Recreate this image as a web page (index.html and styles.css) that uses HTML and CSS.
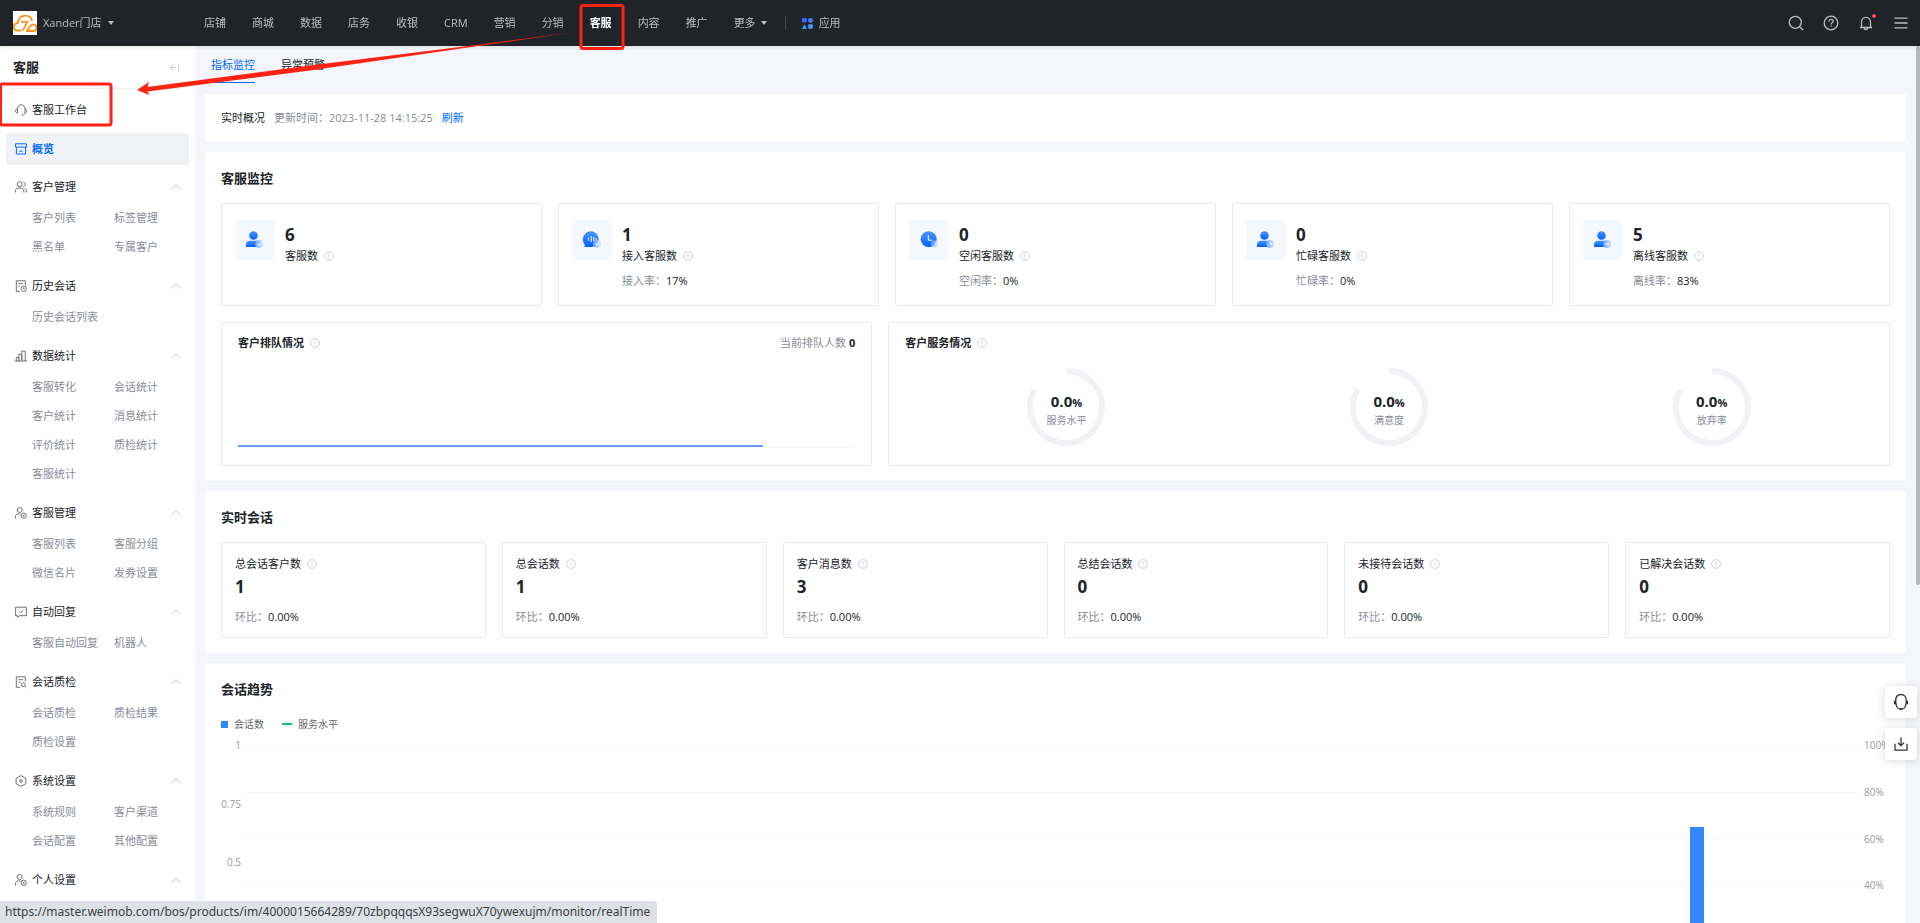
FILE: index.html
```html
<!DOCTYPE html>
<html lang="zh-CN">
  <head>
    <meta charset="UTF-8" />
    <meta name="viewport" content="width=device-width, initial-scale=1.0" />
    <title>客服概览</title>
    <link rel="stylesheet" href="styles.css">
  </head>
  <body>
    <!-- 图标库 -->
    <svg class="icon-defs" width="0" height="0" aria-hidden="true">
      <defs>
        <linearGradient id="blue" x1="0" y1="0" x2="0" y2="1">
          <stop offset="0" stop-color="#4b94ff" />
          <stop offset="1" stop-color="#0062ff" />
        </linearGradient>
        <linearGradient id="badge" x1="0" y1="0" x2="1" y2="0">
          <stop offset="0" stop-color="#6ba7ff" />
          <stop offset="1" stop-color="#d6e6ff" />
        </linearGradient>
      </defs>
      <symbol id="info" viewBox="0 0 10 10">
        <circle cx="5" cy="5" r="4.4" fill="none" stroke="currentColor" stroke-width=".8" />
        <path d="M5 2.4v3.2M5 6.6v.9" stroke="currentColor" stroke-width=".9" />
      </symbol>
      <symbol id="up" viewBox="0 0 10 6">
        <path d="M.5 5.2 5 .8l4.500 4.400" fill="none" stroke="currentColor" stroke-width=".8" />
      </symbol>
      <symbol id="user-set" viewBox="0 0 12 12">
        <circle cx="4.700" cy="3" r="2.500" />
        <path d="M.5 11.500V9.300c0-1.400 1-2.300 2.300-2.300h2.500" />
        <circle cx="8.700" cy="8.700" r="2.600" />
        <circle cx="8.700" cy="8.700" r=".6" />
      </symbol>
      <symbol id="person" viewBox="0 0 20 20">
        <circle cx="8.500" cy="5.500" r="4.300" fill="url(#blue)" />
        <path d="M1 17v-2.300c0-2.300 1.700-3.900 4-3.900h6c2.300 0 4 1.600 4 3.900V17z" fill="url(#blue)" />
        <circle cx="14.200" cy="14" r="4" fill="url(#badge)" />
      </symbol>
    </svg>

    <!-- 顶部导航 -->
    <header class="header">
      <a class="shop" href="#">
        <svg class="logo" viewBox="0 0 24 24">
          <rect width="24" height="24" fill="#fff" />
          <path d="M8.500 19.500H4.500C2 19.500.8 17.700.8 15.800c0-2 1.500-3.700 4-3.700C4.900 7.500 8.200 4.600 12.300 4.600c3.500 0 6 2 6.800 5.200M8 10.800h6.300L9.800 19.500M13 20h7.500c1.800 0 3-1.200 3-3.200 0-2-1.300-3.500-3.200-3.500-2.200 0-3.400 2-6.300 6.500" fill="none" stroke="#ff9518" stroke-width="1.800" />
        </svg>
        <span>Xander门店</span>
        <i class="caret"></i>
      </a>
      <nav class="nav">
        <a href="#">店铺</a>
        <a href="#">商城</a>
        <a href="#">数据</a>
        <a href="#">店务</a>
        <a href="#">收银</a>
        <a href="#">CRM</a>
        <a href="#">营销</a>
        <a href="#">分销</a>
        <a class="active" href="#">客服</a>
        <a href="#">内容</a>
        <a href="#">推广</a>
        <a href="#">更多<i class="caret"></i></a>
      </nav>
      <a class="apps" href="#">
        <svg width="11" height="11" viewBox="0 0 11 11">
          <rect width="4.600" height="4.600" rx="1" fill="#2f6bff" />
          <circle cx="8.500" cy="2.400" r="2.400" fill="#4a7dff" />
          <path d="M2.400 6.200 4.800 11H0z" fill="#1fb0ff" />
          <rect x="6.200" y="6.200" width="4.600" height="4.600" rx="1" fill="#4a9bff" />
        </svg>
        应用
      </a>
      <div class="tools">
        <button aria-label="搜索">
          <svg viewBox="0 0 16 16"><circle cx="7.300" cy="7.300" r="6" /><path d="m11.700 11.700 3.500 3.500" /></svg>
        </button>
        <button aria-label="帮助">
          <svg viewBox="0 0 16 16"><circle cx="8" cy="8" r="6.800" /><path d="M5.900 6.500c0-1.300 1-2.100 2.100-2.100s2.100.8 2.100 1.900c0 1.500-2 1.500-2 3.100M8.100 10.500v1.300" /></svg>
        </button>
        <button aria-label="通知">
          <svg viewBox="0 0 16 16"><path d="M2 12.500h12M3.500 12.500V7c0-2.700 2-4.700 4.500-4.700s4.500 2 4.500 4.700v5.500M6 12.700c.2 1.300 1 2 2 2s1.800-.7 2-2" /><circle class="dot" cx="16" cy="1" r="2" /></svg>
        </button>
        <button aria-label="菜单">
          <svg viewBox="0 0 16 16"><path d="M1.500 3.200h13M1.500 8h13M1.500 12.800h13" /></svg>
        </button>
      </div>
    </header>

    <div class="layout">
      <!-- 侧边栏 -->
      <aside class="sidebar">
        <div class="side-title">
          <h2>客服</h2>
          <button aria-label="收起">
            <svg width="11" height="9" viewBox="0 0 11 9"><path d="M4.500 1 1 4.500 4.500 8M1 4.500h6M9.500 1v7" /></svg>
          </button>
        </div>
        <a class="side-item" href="#">
          <svg class="side-icon" viewBox="0 0 12 12"><path d="M2.500 9V5C2.500 2.400 4 .8 6.200 .8S10 2.400 10 5v3.500c0 1.600-1 2.500-2.600 2.500H6.500M2.500 5C1.200 5 .5 5.900 .5 7s.7 2 2 2M10 5c1.100 0 1.600.9 1.600 2S11.100 9 10 9" /></svg>
          客服工作台
        </a>
        <a class="side-item selected" href="#">
          <svg class="side-icon" viewBox="0 0 12 12"><path d="M.6.800h10.800v3.300H.6zM1.400 4.100v6.900h9.200V4.100M4.200 8.200h3.600" /></svg>
          概览
        </a>

        <section class="group">
          <a class="side-item" href="#">
            <svg class="side-icon" viewBox="0 0 12 12"><circle cx="4.700" cy="3.200" r="2.500" /><path d="M.5 11.500V9.600C.5 8 1.500 7.100 3 7.100h3.300c1.500 0 2.500.9 2.500 2.500v1.900M8.300 1c1.300.3 2 1.100 2 2.200S9.600 5 8.600 5.400M9.800 7.300c1.100.4 1.700 1.200 1.700 2.400v1.800" /></svg>
            客户管理
            <svg class="up"><use href="#up" /></svg>
          </a>
          <div class="links">
            <a href="#">客户列表</a>
            <a href="#">标签管理</a>
            <a href="#">黑名单</a>
            <a href="#">专属客户</a>
          </div>
        </section>
        <section class="group">
          <a class="side-item" href="#">
            <svg class="side-icon" viewBox="0 0 12 12"><path d="M5 11.300H1.300V.8h9v4.400M3.500 3.700h4.700M3.500 6.200H5" /><circle cx="8.700" cy="8.700" r="2.700" /><path d="M8.500 7.300v1.500h1.300" /></svg>
            历史会话
            <svg class="up"><use href="#up" /></svg>
          </a>
          <div class="links">
            <a href="#">历史会话列表</a>
          </div>
        </section>
        <section class="group">
          <a class="side-item" href="#">
            <svg class="side-icon" viewBox="0 0 12 12"><path d="M0 11h12M1.300 11V7.500h2.500V11M3.800 11V4.300h3V11M6.800 11V1h3.500v10" /></svg>
            数据统计
            <svg class="up"><use href="#up" /></svg>
          </a>
          <div class="links">
            <a href="#">客服转化</a>
            <a href="#">会话统计</a>
            <a href="#">客户统计</a>
            <a href="#">消息统计</a>
            <a href="#">评价统计</a>
            <a href="#">质检统计</a>
            <a href="#">客服统计</a>
          </div>
        </section>
        <section class="group">
          <a class="side-item" href="#">
            <svg class="side-icon"><use href="#user-set" /></svg>
            客服管理
            <svg class="up"><use href="#up" /></svg>
          </a>
          <div class="links">
            <a href="#">客服列表</a>
            <a href="#">客服分组</a>
            <a href="#">微信名片</a>
            <a href="#">发券设置</a>
          </div>
        </section>
        <section class="group">
          <a class="side-item" href="#">
            <svg class="side-icon" viewBox="0 0 12 12"><path d="M.6 1.200h10.800v8.500H4.500l-2 1.600V9.700H.6zM4 5.300l1.500 1.500L8.400 4" /></svg>
            自动回复
            <svg class="up"><use href="#up" /></svg>
          </a>
          <div class="links">
            <a href="#">客服自动回复</a>
            <a href="#">机器人</a>
          </div>
        </section>
        <section class="group">
          <a class="side-item" href="#">
            <svg class="side-icon" viewBox="0 0 12 12"><path d="M5 11.300H1.300V.8h9v4.700M3.500 3.700h4.700M3.500 6.200h2" /><circle cx="8.300" cy="8.700" r="1.900" /><path d="m9.700 10 1.600 1.600" /></svg>
            会话质检
            <svg class="up"><use href="#up" /></svg>
          </a>
          <div class="links">
            <a href="#">会话质检</a>
            <a href="#">质检结果</a>
            <a href="#">质检设置</a>
          </div>
        </section>
        <section class="group">
          <a class="side-item" href="#">
            <svg class="side-icon" viewBox="0 0 12 12"><path d="m6 .6 4.900 2.800v5.200L6 11.400 1.100 8.600V3.400z" /><circle cx="6" cy="6" r="1.300" /></svg>
            系统设置
            <svg class="up"><use href="#up" /></svg>
          </a>
          <div class="links">
            <a href="#">系统规则</a>
            <a href="#">客户渠道</a>
            <a href="#">会话配置</a>
            <a href="#">其他配置</a>
          </div>
        </section>
        <section class="group">
          <a class="side-item" href="#">
            <svg class="side-icon"><use href="#user-set" /></svg>
            个人设置
            <svg class="up"><use href="#up" /></svg>
          </a>
        </section>
      </aside>

      <!-- 主体内容 -->
      <main class="main">
        <nav class="tabs">
          <a class="active" href="#">指标监控</a>
          <a href="#">异常预警</a>
        </nav>

        <section class="card overview">
          <span>实时概况</span>
          <span class="muted">更新时间：2023-11-28 14:15:25</span>
          <a href="#">刷新</a>
        </section>

        <!-- 客服监控 -->
        <section class="card">
          <h3>客服监控</h3>
          <div class="monitor">
            <div class="box stat">
              <div class="stat-icon"><svg viewBox="0 0 20 20"><use href="#person" /><path d="m12.500 13.800 1.500 1.500 2.200-2.500" class="mark" /></svg></div>
              <div class="stat-text">
                <strong>6</strong>
                <p>客服数 <svg class="info"><use href="#info" /></svg></p>
              </div>
            </div>
            <div class="box stat">
              <div class="stat-icon"><svg viewBox="0 0 20 20"><path d="M2.200 17c.6-.8.700-1.700.2-3A7.900 7.900 0 1 1 10 17z" fill="url(#blue)" /><path d="M6.500 7.500v3M9.200 6v6M11.700 7v4M14 8v2" class="mark" /><circle cx="15" cy="13.700" r="4" fill="url(#badge)" opacity=".85" /><path d="m13.300 13.600 1.400 1.400 2.200-2.500" class="mark" /></svg></div>
              <div class="stat-text">
                <strong>1</strong>
                <p>接入客服数 <svg class="info"><use href="#info" /></svg></p>
                <p class="rate">接入率：<span>17%</span></p>
              </div>
            </div>
            <div class="box stat">
              <div class="stat-icon"><svg viewBox="0 0 20 20"><circle cx="9.700" cy="9.200" r="8" fill="url(#blue)" /><path d="M9.300 5v5.200h4" class="mark" /><circle cx="15.500" cy="14" r="3.500" fill="url(#badge)" opacity=".75" /></svg></div>
              <div class="stat-text">
                <strong>0</strong>
                <p>空闲客服数 <svg class="info"><use href="#info" /></svg></p>
                <p class="rate">空闲率：<span>0%</span></p>
              </div>
            </div>
            <div class="box stat">
              <div class="stat-icon"><svg viewBox="0 0 20 20"><use href="#person" /><path d="M14.200 11.700V14.300h1.700" class="mark" /></svg></div>
              <div class="stat-text">
                <strong>0</strong>
                <p>忙碌客服数 <svg class="info"><use href="#info" /></svg></p>
                <p class="rate">忙碌率：<span>0%</span></p>
              </div>
            </div>
            <div class="box stat">
              <div class="stat-icon"><svg viewBox="0 0 20 20"><use href="#person" /><path d="M12.500 14H16" class="mark" /></svg></div>
              <div class="stat-text">
                <strong>5</strong>
                <p>离线客服数 <svg class="info"><use href="#info" /></svg></p>
                <p class="rate">离线率：<span>83%</span></p>
              </div>
            </div>
          </div>

          <div class="situation">
            <div class="box queue">
              <div class="box-head">
                <h4>客户排队情况 <svg class="info"><use href="#info" /></svg></h4>
                <span class="muted">当前排队人数 <b>0</b></span>
              </div>
              <div class="queue-axis"><div class="queue-line" style="width: 85%"></div></div>
            </div>
            <div class="box service">
              <div class="box-head">
                <h4>客户服务情况 <svg class="info"><use href="#info" /></svg></h4>
              </div>
              <div class="rings">
                <div class="ring">
                  <svg viewBox="0 0 78 78"><path d="M39 3A36 36 0 1 1 7.500 21.500" /></svg>
                  <div class="ring-text"><strong>0.0<small>%</small></strong><span>服务水平</span></div>
                </div>
                <div class="ring">
                  <svg viewBox="0 0 78 78"><path d="M39 3A36 36 0 1 1 7.500 21.500" /></svg>
                  <div class="ring-text"><strong>0.0<small>%</small></strong><span>满意度</span></div>
                </div>
                <div class="ring">
                  <svg viewBox="0 0 78 78"><path d="M39 3A36 36 0 1 1 7.500 21.500" /></svg>
                  <div class="ring-text"><strong>0.0<small>%</small></strong><span>放弃率</span></div>
                </div>
              </div>
            </div>
          </div>
        </section>

        <!-- 实时会话 -->
        <section class="card">
          <h3>实时会话</h3>
          <div class="sessions">
            <div class="box session">
              <p>总会话客户数 <svg class="info"><use href="#info" /></svg></p>
              <strong>1</strong>
              <p class="rate">环比：<span>0.00%</span></p>
            </div>
            <div class="box session">
              <p>总会话数 <svg class="info"><use href="#info" /></svg></p>
              <strong>1</strong>
              <p class="rate">环比：<span>0.00%</span></p>
            </div>
            <div class="box session">
              <p>客户消息数 <svg class="info"><use href="#info" /></svg></p>
              <strong>3</strong>
              <p class="rate">环比：<span>0.00%</span></p>
            </div>
            <div class="box session">
              <p>总结会话数 <svg class="info"><use href="#info" /></svg></p>
              <strong>0</strong>
              <p class="rate">环比：<span>0.00%</span></p>
            </div>
            <div class="box session">
              <p>未接待会话数 <svg class="info"><use href="#info" /></svg></p>
              <strong>0</strong>
              <p class="rate">环比：<span>0.00%</span></p>
            </div>
            <div class="box session">
              <p>已解决会话数 <svg class="info"><use href="#info" /></svg></p>
              <strong>0</strong>
              <p class="rate">环比：<span>0.00%</span></p>
            </div>
          </div>
        </section>

        <!-- 会话趋势 -->
        <section class="card">
          <h3>会话趋势</h3>
          <div class="legend">
            <span><i class="square"></i>会话数</span>
            <span><i class="dash"></i>服务水平</span>
          </div>
          <div class="chart">
            <div class="axis left">
              <span>1</span><span>0.75</span><span>0.5</span><span>0.25</span><span>0</span>
            </div>
            <div class="plot">
              <div class="grid-lines"><i></i><i></i><i></i><i></i><i></i><i></i></div>
              <!-- 每小时一列，共 15 列 -->
              <div class="bars">
                <i></i><i></i><i></i><i></i><i></i><i></i><i></i><i></i><i></i><i></i><i></i><i></i><i></i>
                <i class="bar" style="height: 65%"></i>
                <i></i>
              </div>
            </div>
            <div class="axis right">
              <span>100%</span><span>80%</span><span>60%</span><span>40%</span><span>20%</span><span>0%</span>
            </div>
          </div>
        </section>
      </main>
    </div>

    <div class="scroll-thumb"></div>

    <!-- 悬浮按钮 -->
    <div class="float-tools">
      <button aria-label="联系客服">
        <svg width="16" height="18" viewBox="0 0 16 18"><path d="M5.800 15.800C3.500 14.300 2.700 11.500 2.700 7.700 2.700 3.800 4.800 1.500 8 1.500s5.300 2.300 5.300 6.200c0 3.800-.8 6.600-3.100 8.100" /><path d="M2 7.800v3.500M14 7.800v3.500M6.300 16h3.400" stroke-width="2.200" /></svg>
      </button>
      <button aria-label="下载">
        <svg width="16" height="16" viewBox="0 0 16 16"><path d="M2 7.800v6.400h12V7.800M8 1.500v8M5 6.700l3 3 3-3" /></svg>
      </button>
    </div>

    <!-- 标注 -->
    <svg class="marks" width="640" height="130" viewBox="0 0 640 130" aria-hidden="true">
      <rect x="581" y="5.500" width="42" height="43" rx="2" />
      <rect x="0.500" y="84" width="110.500" height="41" rx="2" />
      <path d="M137 90 149 82l-1.500 5L310 65.500 480 44.500l92-12-92 13.300L310 70.500 147.500 91.500l2 3.500z" />
    </svg>

    <div class="status">https://master.weimob.com/bos/products/im/4000015664289/70zbpqqqsX93segwuX70ywexujm/monitor/realTime</div>
  </body>
</html>
```

FILE: styles.css
```css
/* 基本页面样式 */
* {
  box-sizing: border-box;
}

body {
  margin: 0;
  height: 100vh;
  display: flex;
  flex-direction: column;
  overflow: hidden;
  font-family: 'Open Sans', 'Noto Sans CJK SC', sans-serif;
  font-size: 11px;
  line-height: 18px;
  color: #202328;
  background: #f5f6fb;
}

h2,
h3,
h4,
p {
  margin: 0;
}

a {
  color: inherit;
  text-decoration: none;
}

button {
  display: flex;
  align-items: center;
  justify-content: center;
  padding: 0;
  border: none;
  background: none;
  color: inherit;
  cursor: pointer;
}

.icon-defs {
  position: absolute;
}

/* 顶部导航 */
.header {
  flex: none;
  display: flex;
  align-items: center;
  height: 46px;
  padding: 0 11px 0 13px;
  color: #bcbdbf;
  background: #202328;
  box-shadow: 0 1px 4px rgba(0, 0, 0, 0.12);
  z-index: 1;
}

.shop {
  display: flex;
  align-items: center;
  gap: 6px;
  width: 191px;
}

.logo {
  width: 24px;
  height: 24px;
}

.caret {
  display: inline-block;
  border: 3px solid transparent;
  border-top: 4px solid #bcbdbf;
  border-bottom: none;
}

.nav {
  display: flex;
  gap: 26px;
}

.nav .active {
  color: #fff;
  font-weight: bold;
}

.nav .caret {
  margin-left: 5px;
  vertical-align: 2px;
}

.apps {
  display: flex;
  align-items: center;
  gap: 6px;
  margin-left: 18px;
  position: relative;
  padding-left: 17px;
}

.apps::before {
  content: '';
  position: absolute;
  left: 0;
  width: 1px;
  height: 14px;
  background: #43464b;
}

.tools {
  display: flex;
  gap: 19px;
  margin-left: auto;
}

.tools svg {
  width: 16px;
  height: 16px;
  fill: none;
  stroke: #bcbdbf;
  stroke-width: 1.3;
  overflow: visible;
}

.tools .dot {
  fill: #ff4d4f;
  stroke: none;
}

.layout {
  flex: 1;
  display: flex;
  min-height: 0;
}

/* 侧边栏 */
.sidebar {
  flex: none;
  width: 195px;
  padding: 0 6px;
  overflow: hidden;
  background: #fff;
}

.side-title {
  display: flex;
  align-items: center;
  justify-content: space-between;
  height: 43px;
  margin: 0 7px 5px;
  padding-right: 2px;
  border-bottom: 1px solid #f0f1f4;
}

.side-title h2 {
  font-size: 13px;
}

.side-title svg {
  fill: none;
  stroke: #c9cbd0;
}

.side-item {
  display: flex;
  align-items: center;
  gap: 5px;
  height: 32px;
  padding: 0 8px 0 9px;
  border-radius: 2px;
}

.side-icon {
  width: 12px;
  height: 12px;
  fill: none;
  stroke: #6e707c;
  overflow: visible;
}

.side-item.selected {
  margin: 7px 0 6px;
  color: #006aff;
  font-weight: bold;
  background: #f1f2f6;
}

.selected .side-icon {
  stroke: #006aff;
}

.up {
  width: 10px;
  height: 6px;
  margin-left: auto;
  color: #b9bbc2;
}

.group {
  padding-bottom: 9px;
}

.links {
  display: grid;
  grid-template-columns: 82px 1fr;
  padding-left: 26px;
  line-height: 29px;
  color: #8a8b99;
}

.links a {
  white-space: nowrap;
}

/* 主体内容 */
.main {
  flex: 1;
  min-width: 0;
  padding: 0 14px 0 10px;
  overflow: hidden;
}

.tabs {
  display: flex;
  gap: 26px;
  height: 48px;
  padding: 0 6px;
}

.tabs a {
  height: 37px;
  line-height: 38px;
}

.tabs .active {
  color: #006aff;
  border-bottom: 1px solid #006aff;
}

.card {
  margin-bottom: 10px;
  padding: 16px 16px 15px;
  border-radius: 2px;
  background: #fff;
}

.overview {
  display: flex;
  gap: 9px;
  padding: 15px 16px;
}

.overview a {
  color: #006aff;
}

.muted,
.rate {
  color: #8a8b99;
}

.rate span,
.muted b {
  color: #202328;
}

h3 {
  margin-bottom: 15px;
  font-size: 13px;
  line-height: 20px;
}

.box {
  border: 1px solid #e8eaee;
  border-radius: 2px;
}

.box strong {
  display: block;
  font-size: 17px;
  line-height: 24px;
}

.info {
  width: 10px;
  height: 10px;
  margin-left: 3px;
  color: #c5c7cd;
  vertical-align: -1px;
}

/* 客服监控 */
.monitor {
  display: grid;
  grid-template-columns: repeat(5, 1fr);
  gap: 16px;
  margin-bottom: 16px;
}

.stat {
  display: flex;
  gap: 10px;
  padding: 16px 13px 15px;
}

.stat-icon {
  display: flex;
  align-items: center;
  justify-content: center;
  width: 40px;
  height: 40px;
  border-radius: 4px;
  background: #f5f8ff;
}

.stat-icon svg {
  width: 20px;
  height: 20px;
}

.mark {
  fill: none;
  stroke: #fff;
  stroke-width: 1;
}

.stat-text {
  padding-top: 3px;
}

.stat .rate {
  margin-top: 7px;
}

.situation {
  display: grid;
  grid-template-columns: 13fr 20fr;
  gap: 16px;
}

.queue,
.service {
  display: flex;
  flex-direction: column;
  padding: 10px 16px 17px;
}

.box-head {
  display: flex;
  justify-content: space-between;
  line-height: 20px;
}

h4 {
  font-size: 11px;
}

.queue-axis {
  margin-top: auto;
  border-bottom: 1px solid #f3f4f7;
}

.queue-line {
  height: 2px;
  background: #6c9bff;
}

.rings {
  display: grid;
  grid-template-columns: repeat(3, 1fr);
  justify-items: center;
  padding: 15px 0 2px;
}

.ring {
  display: grid;
  place-items: center;
}

.ring > * {
  grid-area: 1 / 1;
}

.ring svg {
  width: 78px;
  height: 78px;
  fill: none;
  stroke: #f1f2f6;
  stroke-width: 6;
}

.ring-text {
  padding-top: 4px;
  text-align: center;
  line-height: 14px;
}

.ring-text strong {
  font-size: 15px;
  line-height: 20px;
}

.ring-text small {
  font-size: 11px;
}

.ring-text span {
  font-size: 10px;
  color: #8a8b99;
}

/* 实时会话 */
.sessions {
  display: grid;
  grid-template-columns: repeat(6, 1fr);
  gap: 16px;
}

.session {
  padding: 12px 13px 11px;
}

.session strong {
  margin: 2px 0 9px;
}

/* 会话趋势 */
.legend {
  display: flex;
  gap: 18px;
  font-size: 10px;
  line-height: 20px;
  color: #666;
}

.legend span {
  display: flex;
  align-items: center;
  gap: 6px;
}

.square {
  width: 7px;
  height: 7px;
  background: #2f86ff;
}

.dash {
  width: 10px;
  height: 2px;
  background: #0fc46c;
}

.chart {
  display: flex;
  height: 232px;
  margin-top: 12px;
}

.axis {
  display: flex;
  flex-direction: column;
  justify-content: space-between;
  margin: -7px 0;
  font-size: 10px;
  line-height: 12px;
  color: #999;
}

.axis.left {
  width: 26px;
  padding-right: 6px;
  text-align: right;
}

.axis.right {
  width: 32px;
  padding-left: 6px;
}

.plot {
  flex: 1;
  display: grid;
}

.plot > div {
  grid-area: 1 / 1;
}

.grid-lines {
  display: flex;
  flex-direction: column;
  justify-content: space-between;
}

.grid-lines i {
  height: 1px;
  background: #f5f5f7;
}

.bars {
  display: grid;
  grid-template-columns: repeat(15, 1fr);
  align-items: end;
  justify-items: center;
}

.bar {
  width: 14px;
  background: #3388ff;
}

/* 滚动条 */
.scroll-thumb {
  position: fixed;
  top: 46px;
  right: 0;
  width: 4px;
  height: 539px;
  border-radius: 2px;
  background: #b7b8ba;
}

/* 悬浮按钮 */
.float-tools {
  position: fixed;
  right: 3px;
  bottom: 163px;
  display: flex;
  flex-direction: column;
  gap: 10px;
}

.float-tools button {
  width: 32px;
  height: 32px;
  border-radius: 4px;
  background: #fff;
  box-shadow: 0 1px 8px rgba(0, 0, 0, 0.15);
}

.float-tools svg {
  fill: none;
  stroke: #33363c;
  stroke-width: 1.3;
}

/* 红框和箭头 */
.marks {
  position: absolute;
  top: 0;
  left: 0;
  z-index: 2;
  pointer-events: none;
}

.marks rect {
  fill: none;
  stroke: #ff2314;
  stroke-width: 3;
}

.marks path {
  fill: #ff2314;
}

/* 链接状态栏 */
.status {
  position: fixed;
  left: 0;
  bottom: 0;
  height: 22px;
  padding: 0 7px 0 5px;
  border-top-right-radius: 4px;
  font-family: 'Noto Sans', sans-serif;
  font-size: 12px;
  line-height: 22px;
  color: #3c4043;
  background: #dee1e6;
}
```
